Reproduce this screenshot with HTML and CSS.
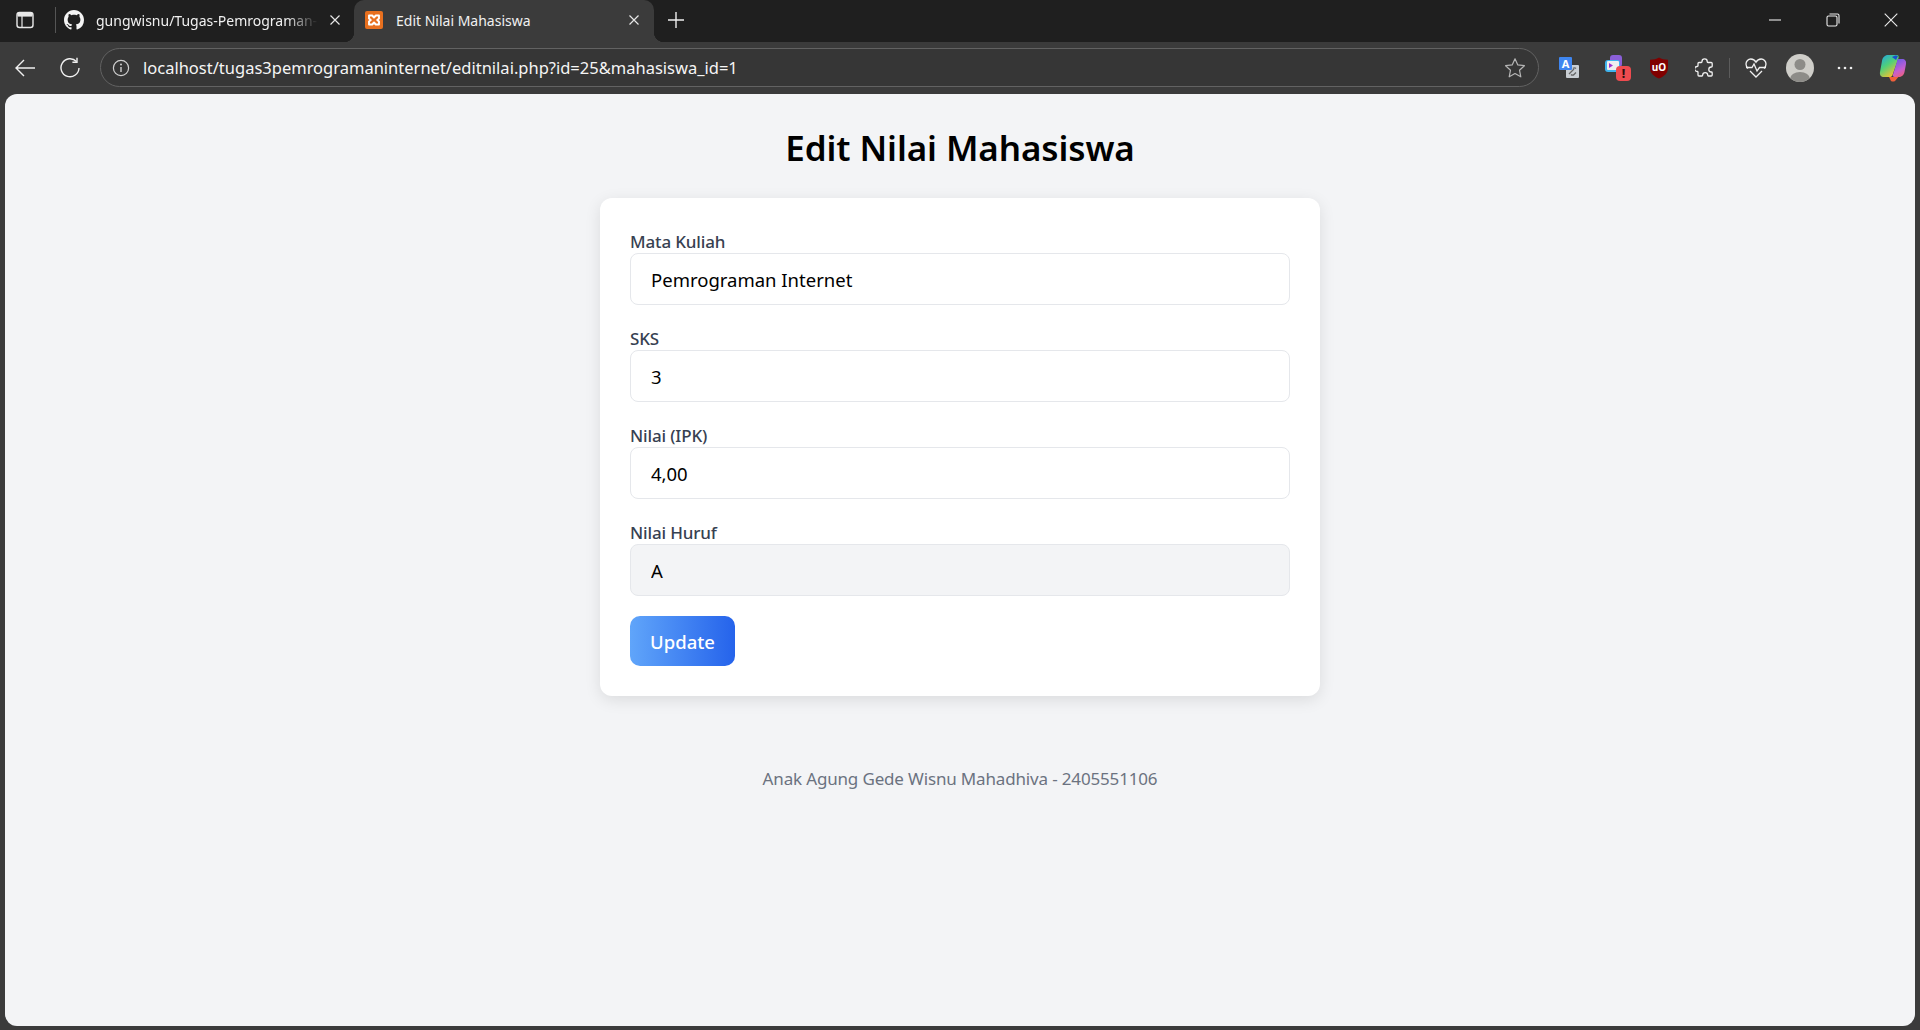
FILE: index.html
```html
<!DOCTYPE html>
<html>
<head>
  <title>Edit Nilai Mahasiswa</title>
  <link rel="stylesheet" href="styles.css">
</head>
<body>
  <div class="tabstrip">
    <svg class="ic sidebar-ic" width="20" height="20" viewBox="0 0 20 20"><rect x="2" y="2.5" width="16" height="15" rx="2.5" fill="none" stroke="#e8e8e8" stroke-width="1.4"/><path d="M3 6h14M7 6v11" stroke="#e8e8e8" stroke-width="1.2" fill="none"/><rect x="2.5" y="3" width="15" height="3.2" fill="#e8e8e8"/></svg>
    <span class="tab-divider"></span>
    <div class="tab">
      <svg class="tab-ic" width="20" height="20" viewBox="0 0 16 16"><path fill="#f4f4f4" d="M8 0C3.58 0 0 3.58 0 8c0 3.54 2.29 6.53 5.47 7.59.4.07.55-.17.55-.38 0-.19-.01-.82-.01-1.49-2.01.37-2.53-.49-2.69-.94-.09-.23-.48-.94-.82-1.13-.28-.15-.68-.52-.01-.53.63-.01 1.08.58 1.23.82.72 1.21 1.87.87 2.33.66.07-.52.28-.87.51-1.07-1.78-.2-3.64-.89-3.64-3.95 0-.87.31-1.59.82-2.15-.08-.2-.36-1.02.08-2.12 0 0 .67-.21 2.2.82.64-.18 1.32-.27 2-.27.68 0 1.36.09 2 .27 1.53-1.04 2.2-.82 2.2-.82.44 1.1.16 1.92.08 2.12.51.56.82 1.27.82 2.15 0 3.07-1.87 3.75-3.65 3.95.29.25.54.73.54 1.48 0 1.07-.01 1.93-.01 2.2 0 .21.15.46.55.38A8.013 8.013 0 0016 8c0-4.42-3.58-8-8-8z"/></svg>
      <span class="tab-title tab-title-fade">gungwisnu/Tugas-Pemrograman-</span>
      <svg class="tab-close" width="12" height="12" viewBox="0 0 12 12"><path d="M1.5 1.5l9 9M10.5 1.5l-9 9" stroke="#e6e6e6" stroke-width="1.2"/></svg>
    </div>
    <div class="tab tab-active">
      <svg class="tab-ic" width="20" height="20" viewBox="0 0 20 20"><rect x="1" y="1" width="18" height="18" rx="2" fill="#e8701f"/><path d="M5 5.5h3.2L10 7.5l1.8-2H15v3l-1.8 1.5L15 11.5v3h-3.2L10 12.5l-1.8 2H5v-3L6.8 10 5 8.5z" fill="none" stroke="#fff" stroke-width="1.9" stroke-linejoin="round"/></svg>
      <span class="tab-title">Edit Nilai Mahasiswa</span>
      <svg class="tab-close" width="12" height="12" viewBox="0 0 12 12"><path d="M1.5 1.5l9 9M10.5 1.5l-9 9" stroke="#e6e6e6" stroke-width="1.2"/></svg>
    </div>
    <svg class="new-tab" width="20" height="20" viewBox="0 0 20 20"><path d="M10 2v16M2 10h16" stroke="#eee" stroke-width="1.4"/></svg>
    <div class="window-controls">
      <svg width="14" height="14" viewBox="0 0 14 14"><path d="M1 7h12" stroke="#ececec" stroke-width="1.1"/></svg>
      <svg width="14" height="14" viewBox="0 0 14 14"><rect x="1" y="3" width="10" height="10" rx="1.5" fill="none" stroke="#ececec" stroke-width="1.1"/><path d="M3.5 1h8A1.5 1.5 0 0 1 13 2.5v8" fill="none" stroke="#ececec" stroke-width="1.1"/></svg>
      <svg width="14" height="14" viewBox="0 0 14 14"><path d="M.7.7l12.6 12.6M13.3.7L.7 13.3" stroke="#ececec" stroke-width="1.1"/></svg>
    </div>
  </div>

  <div class="toolbar">
    <svg class="nav-ic" width="22" height="22" viewBox="0 0 22 22"><path d="M21 11H2M10 3l-8 8 8 8" fill="none" stroke="#f0f0f0" stroke-width="1.4"/></svg>
    <svg class="nav-ic" width="22" height="22" viewBox="0 0 22 22"><path d="M17.5 4.5A9 9 0 1 0 20 11" fill="none" stroke="#f0f0f0" stroke-width="1.4"/><path d="M18 .8v4.4h-4.6" fill="none" stroke="#f0f0f0" stroke-width="1.4"/></svg>
    <div class="address">
      <svg width="18" height="18" viewBox="0 0 18 18"><circle cx="9" cy="9" r="7.6" fill="none" stroke="#d0d0d0" stroke-width="1.2"/><path d="M9 8v5" stroke="#d0d0d0" stroke-width="1.4"/><circle cx="9" cy="5.4" r="1" fill="#d0d0d0"/></svg>
      <span class="url">localhost/tugas3pemrogramaninternet/editnilai.php?id=25&amp;mahasiswa_id=1</span>
      <svg width="22" height="22" viewBox="0 0 22 22"><path d="M11 1.8l2.8 6.1 6.6.8-4.9 4.5 1.3 6.6-5.8-3.3-5.8 3.3 1.3-6.6L1.600 8.700l6.600-.8z" fill="none" stroke="#b5b5b5" stroke-width="1.2" stroke-linejoin="round"/></svg>
    </div>
    <div class="extensions">
      <svg class="ext ext-translate" width="22" height="22" viewBox="0 0 22 22"><rect x="8" y="8" width="13" height="13" rx="1" fill="#c9ced3"/><path d="M11 17l5-5M13 17.500a2 2 0 0 0 3 0l2-2M15 11.500a2 2 0 0 1 3 0" fill="none" stroke="#666" stroke-width="1.300"/><rect x="1" y="0" width="13" height="13" rx="1" fill="#3f86f0"/><text x="7.500" y="10.500" class="ext-letter">A</text></svg>
      <svg class="ext ext-video" width="28" height="28" viewBox="0 0 28 28"><rect x="6" y="1" width="12" height="12" rx="3" fill="#8a5fd8"/><rect x="1" y="6" width="15" height="12" rx="3" fill="#3fb4ee"/><rect x="3" y="7" width="12" height="9" rx="1" fill="#eee"/><path d="M5 9l4 2.500L5 14z" fill="#a030d0"/><rect x="12" y="12" width="15" height="15" rx="4" fill="#ee4b4f"/><text x="19.500" y="24" class="ext-bang">!</text></svg>
      <svg class="ext ext-ublock" width="20" height="22" viewBox="0 0 20 22"><path d="M10 .5c2.500 1.500 5.500 2.200 9 2.300V11c0 5-3.800 8.500-9 10.500C4.800 19.500 1 16 1 11V2.800C4.500 2.700 7.500 2 10 .5z" fill="#800000"/><text x="10" y="14" class="ext-ub">uO</text></svg>
      <svg class="ext ext-puzzle" width="20" height="20" viewBox="0 0 20 20"><path d="M7 3.500a2.600 2.600 0 0 1 5.200 0c0 .6.300 1 .8 1h3.200c.6 0 1 .4 1 1v2.700c0 .5-.4.8-.9.800a2.500 2.500 0 0 0 0 5c.5 0 .9.300.9.800v2.200c0 .6-.4 1-1 1h-2.700c-.5 0-.8-.4-.8-.9a2.500 2.500 0 0 0-5 0c0 .5-.3.900-.8.900H4c-.6 0-1-.4-1-1v-2.700c0-.5-.4-.8-.9-.8a2.500 2.500 0 0 1 0-5c.5 0 .9-.3.900-.8V5.500c0-.6.400-1 1-1h2.200c.5 0 .8-.4.800-1z" fill="none" stroke="#f0f0f0" stroke-width="1.300"/></svg>
      <span class="ext-divider"></span>
      <svg class="ext ext-heart" width="22" height="20" viewBox="0 0 22 20"><path d="M3 10.500C1.500 9 1 7.700 1 6c0-2.800 2.200-5 4.800-5C8 1 10 2.300 11 4.200 12 2.300 14 1 16.200 1 18.800 1 21 3.200 21 6c0 1.700-.5 3-2 4.500M5 13l6 6 6-6" fill="none" stroke="#f0f0f0" stroke-width="1.300"/><path d="M1 9.500h6l2-3.500 3 7 2.500-3.500H21" fill="none" stroke="#f0f0f0" stroke-width="1.300"/></svg>
      <svg class="ext ext-avatar" width="28" height="28" viewBox="0 0 28 28"><defs><clipPath id="avatarClip"><circle cx="14" cy="14" r="14"/></clipPath></defs><circle cx="14" cy="14" r="14" fill="#cfcec9"/><g clip-path="url(#avatarClip)"><circle cx="14" cy="10.500" r="5.500" fill="#8d8c88"/><ellipse cx="14" cy="25" rx="10" ry="7" fill="#8d8c88"/></g></svg>
      <svg class="ext ext-dots" width="16" height="4" viewBox="0 0 16 4"><circle cx="2" cy="2" r="1.300" fill="#eee"/><circle cx="8" cy="2" r="1.300" fill="#eee"/><circle cx="14" cy="2" r="1.300" fill="#eee"/></svg>
      <svg class="ext ext-copilot" width="28" height="28" viewBox="0 0 28 28"><defs><linearGradient id="copA" x1="0" y1="0" x2="0.600" y2="1"><stop offset="0" stop-color="#1fa3e8"/><stop offset="0.500" stop-color="#4fd07a"/><stop offset="1" stop-color="#f5c02e"/></linearGradient><linearGradient id="copB" x1="0.300" y1="0" x2="0.700" y2="1"><stop offset="0" stop-color="#6a5ae8"/><stop offset="0.600" stop-color="#c45fd0"/><stop offset="1" stop-color="#f0607a"/></linearGradient></defs><path d="M9 1h9c1.500 0 2 1.500 1.500 3l-6 17c-.5 1.500-1.500 2-3 2H5c-3 0-4.500-2-4-5l2-11C3.500 3.500 6 1 9 1z" fill="url(#copA)"/><path d="M19 5h4c3 0 4.500 2 4 5l-1.500 8c-.5 3-3 5-6 5h-4c-1.500 0-2-1-1.500-2.500l4-13c.2-1.500.5-2.500 1-2.500z" fill="url(#copB)"/><path d="M10 23l8 0c1.500 0 3-1 3.500-2.500L16 27c-1 .7-3 .7-4 0z" fill="#f0603a"/><path d="M13 3c2-1.500 5-2 6-1l-2 4z" fill="#1a4fd0"/></svg>
    </div>
  </div>

  <div class="page">
    <h1 class="page-title">Edit Nilai Mahasiswa</h1>
    <form class="card">
      <div class="form-group">
        <label class="form-label">Mata Kuliah</label>
        <input class="form-input" type="text" value="Pemrograman Internet">
      </div>
      <div class="form-group">
        <label class="form-label">SKS</label>
        <input class="form-input" type="text" value="3">
      </div>
      <div class="form-group">
        <label class="form-label">Nilai (IPK)</label>
        <input class="form-input" type="text" value="4,00">
      </div>
      <div class="form-group">
        <label class="form-label">Nilai Huruf</label>
        <input class="form-input form-input-readonly" type="text" value="A" readonly>
      </div>
      <button class="btn-update" type="button">Update</button>
    </form>
    <p class="footer-text">Anak Agung Gede Wisnu Mahadhiva - 2405551106</p>
  </div>
</body>
</html>
```

FILE: styles.css
```css
* {
  box-sizing: border-box;
}

html, body {
  margin: 0;
  height: 100%;
  overflow: hidden;
}

body {
  display: flex;
  flex-direction: column;
  background-color: #3b3b3b;
  font-family: "Noto Sans", "Open Sans", Arial, sans-serif;
}

svg {
  display: block;
  flex: none;
}

/* browser tabs */
.tabstrip {
  display: flex;
  align-items: center;
  height: 42px;
  background-color: #1f1f1f;
  flex: none;
}

.sidebar-ic {
  margin: 0 0 2px 15px;
}

.tab-divider {
  width: 1px;
  height: 26px;
  margin: 0 0 2px 20px;
  background-color: #555;
}

.tab {
  display: flex;
  align-items: center;
  width: 290px;
  height: 42px;
  padding: 0 5px 2px 8px;
  color: #f0f0f0;
  font-size: 14px;
}

.tab-active {
  position: relative;
  width: 300px;
  margin-left: 8px;
  padding: 0 14px 2px 10px;
  background-color: #3b3b3b;
  border-radius: 10px 10px 0 0;
}

.tab-active::before,
.tab-active::after {
  content: "";
  position: absolute;
  bottom: 0;
  width: 10px;
  height: 10px;
}

.tab-active::before {
  left: -10px;
  background: radial-gradient(circle at 0 0, transparent 10px, #3b3b3b 10.5px);
}

.tab-active::after {
  right: -10px;
  background: radial-gradient(circle at 100% 0, transparent 10px, #3b3b3b 10.5px);
}

.tab-ic {
  margin-right: 12px;
}

.tab-title {
  flex: 1;
  white-space: nowrap;
}

.tab-title-fade {
  -webkit-mask-image: linear-gradient(to right, #000 190px, transparent 222px);
  mask-image: linear-gradient(to right, #000 190px, transparent 222px);
}

.tab-close {
  margin-left: 10px;
}

.new-tab {
  margin: 0 0 2px 12px;
}

.window-controls {
  display: flex;
  align-items: center;
  gap: 44px;
  margin: 0 0 2px auto;
  padding-right: 22px;
}

/* address bar row */
.toolbar {
  display: flex;
  align-items: center;
  height: 52px;
  padding: 0 0 1px 14px;
  flex: none;
}

.nav-ic {
  margin-right: 23px;
}

.address {
  display: flex;
  align-items: center;
  width: 1439px;
  height: 39px;
  margin-left: -4px;
  padding: 0 12px 0 11px;
  border: 1px solid #626262;
  border-radius: 20px;
  background-color: #363636;
}

.url {
  flex: 1;
  margin-left: 13px;
  color: #f5f5f5;
  font-size: 16.5px;
  white-space: nowrap;
}

.extensions {
  display: flex;
  align-items: center;
  flex: 1;
}

.ext-translate {
  margin-left: 19px;
}

.ext-video {
  margin-left: 24px;
}

.ext-ublock {
  margin-left: 17px;
}

.ext-puzzle {
  margin-left: 26px;
}

.ext-divider {
  width: 1px;
  height: 20px;
  margin-left: 14px;
  background-color: #5c5c5c;
}

.ext-heart {
  margin-left: 15px;
}

.ext-avatar {
  margin-left: 19px;
}

.ext-dots {
  margin-left: 23px;
}

.ext-copilot {
  margin-left: 26px;
}

.ext-letter {
  fill: #fff;
  font-size: 11px;
  font-weight: 700;
  text-anchor: middle;
}

.ext-bang {
  fill: #2b1010;
  font-size: 12px;
  font-weight: 800;
  text-anchor: middle;
}

.ext-ub {
  fill: #fff;
  font-size: 10px;
  font-weight: 700;
  text-anchor: middle;
}

/* page content */
.page {
  flex: 1;
  margin: 0 5px 4px;
  padding-top: 27px;
  background-color: #f3f4f6;
  border-radius: 12px;
}

.page-title {
  margin: 0 0 23px;
  color: #000;
  font-size: 35px;
  font-weight: 600;
  line-height: 54px;
  letter-spacing: -0.1px;
  text-align: center;
}

.card {
  width: 720px;
  margin: 0 auto;
  padding: 30px;
  background-color: #fff;
  border-radius: 12px;
  box-shadow: 0 4px 16px rgba(0, 0, 0, 0.1);
}

.form-group {
  margin-bottom: 20px;
}

.form-label {
  display: block;
  height: 25px;
  padding-top: 1px;
  color: #374151;
  font-size: 17px;
  font-weight: 500;
  letter-spacing: -0.15px;
  line-height: 25px;
}

.form-input {
  display: block;
  width: 100%;
  height: 52px;
  padding: 0 20px;
  border: 1px solid #e5e7eb;
  border-radius: 8px;
  background-color: #fff;
  color: #000;
  font-family: inherit;
  font-size: 18.5px;
}

.form-input-readonly {
  background-color: #f3f4f6;
}

.btn-update {
  display: block;
  width: 105px;
  height: 50px;
  padding-top: 2px;
  border: none;
  border-radius: 10px;
  background: linear-gradient(to right, #60a5fa, #2563eb);
  color: #fff;
  font-family: inherit;
  font-size: 18.5px;
  font-weight: 500;
}

.footer-text {
  margin: 72px 0 0;
  color: #6b7280;
  font-size: 17px;
  letter-spacing: -0.16px;
  line-height: 22px;
  text-align: center;
}
```
